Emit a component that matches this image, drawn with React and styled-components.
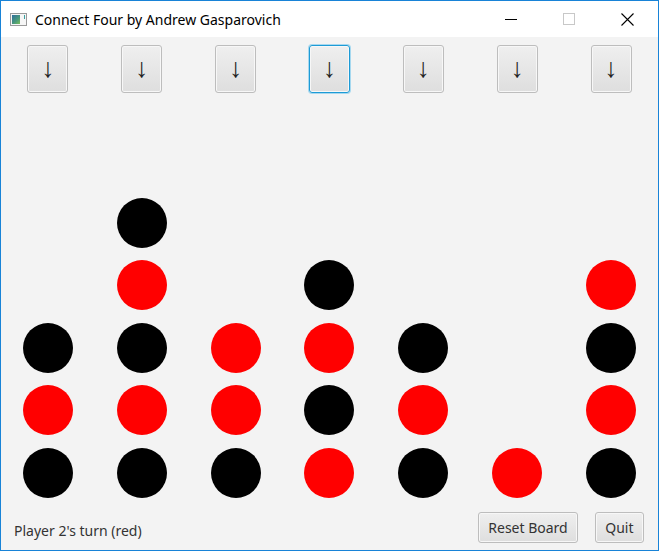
import React, { useState } from "react";
import styled, { createGlobalStyle } from "styled-components";

const GlobalStyle = createGlobalStyle`
  html, body {
    margin: 0;
    padding: 0;
    background: #ffffff;
  }
  * {
    box-sizing: border-box;
  }
`;

const Window = styled.div`
  width: 659px;
  height: 551px;
  border: 1px solid #1883d7;
  display: flex;
  flex-direction: column;
  font-family: "Noto Sans", "Open Sans", sans-serif;
  background: #f3f3f3;
  overflow: hidden;
`;

const TitleBar = styled.div`
  height: 36px;
  flex: none;
  background: #ffffff;
  display: flex;
  align-items: center;
  padding-left: 9px;
  padding-right: 2px;
`;

const AppIcon = styled.div`
  width: 17px;
  height: 13px;
  border: 1px solid #9a9a9a;
  background: #f6f6f6;
  display: flex;
  padding: 1px;
  gap: 2px;
  margin-right: 8px;
`;

const IconPane = styled.div`
  width: 8px;
  height: 100%;
  background: linear-gradient(135deg, #2f6e9c 0%, #4a9a7a 60%, #7cbf5a 100%);
`;

const IconDot = styled.div`
  width: 1px;
  height: 4px;
  background: #3aa0a0;
  margin-left: 2px;
`;

const Title = styled.div`
  font-family: "Noto Sans", sans-serif;
  font-size: 14px;
  color: #000000;
  flex: 1;
  white-space: nowrap;
`;

const Controls = styled.div`
  display: flex;
  height: 100%;
`;

const Control = styled.div`
  width: 58px;
  height: 100%;
  display: flex;
  align-items: center;
  justify-content: center;
`;

const Content = styled.div`
  flex: 1;
  display: flex;
  flex-direction: column;
  padding-top: 8px;
`;

const Columns = styled.div`
  display: grid;
  grid-template-columns: repeat(7, 1fr);
`;

const DropRow = styled(Columns)`
  height: 48px;
`;

const DropButton = styled.button`
  justify-self: center;
  width: 41px;
  height: 48px;
  padding: 0 0 2px 0;
  border-radius: 3px;
  border: 1px solid ${({ $focused }) => ($focused ? "#1d9bd6" : "#bdbdbd")};
  box-shadow: ${({ $focused }) =>
    $focused ? "0 0 0 1px #a6d8ef, inset 0 0 0 1px #f7f7f7" : "inset 0 0 0 1px #f7f7f7"};
  background: linear-gradient(#efefef, #dedede);
  font-family: "Liberation Sans", sans-serif;
  font-size: 27px;
  color: #222222;
  line-height: 1;
  cursor: pointer;
`;

const Board = styled(Columns)`
  margin-top: 36px;
  grid-template-rows: repeat(6, 62.5px);
`;

const Cell = styled.div`
  display: flex;
  align-items: center;
  justify-content: center;
`;

const Disc = styled.div`
  width: 50px;
  height: 50px;
  border-radius: 50%;
  background: ${({ $color }) => ($color === "r" ? "#ff0000" : "#000000")};
`;

const Footer = styled.div`
  margin-top: auto;
  display: flex;
  align-items: center;
  padding: 0 14px 6px 13px;
  height: 45px;
`;

const Status = styled.div`
  flex: 1;
  font-size: 14px;
  color: #333333;
  padding-top: 11px;
`;

const FooterButton = styled.button`
  height: 31px;
  padding: 0 ${({ $pad }) => $pad}px;
  margin-left: 17px;
  border-radius: 3px;
  border: 1px solid #bdbdbd;
  box-shadow: inset 0 0 0 1px #f7f7f7;
  background: linear-gradient(#efefef, #dedede);
  font-family: "Noto Sans", sans-serif;
  font-size: 14px;
  color: #333333;
  margin-top: 6px;
`;

const initialBoard = [
  "       ",
  " b     ",
  " r b  r",
  "bbrrb b",
  "rrrbr r",
  "bbbrbrb",
];

export default function App() {
  const [board] = useState(initialBoard);

  return (
    <>
      <GlobalStyle />
      <Window>
        <TitleBar>
          <AppIcon>
            <IconPane />
            <IconDot />
          </AppIcon>
          <Title>Connect Four by Andrew Gasparovich</Title>
          <Controls>
            <Control>
              <svg width="12" height="12" viewBox="0 0 12 12">
                <line x1="0" y1="6.5" x2="12" y2="6.5" stroke="#000" strokeWidth="1" />
              </svg>
            </Control>
            <Control>
              <svg width="12" height="12" viewBox="0 0 12 12">
                <rect x="0.5" y="0.5" width="11" height="11" fill="none" stroke="#c8c8c8" />
              </svg>
            </Control>
            <Control>
              <svg width="13" height="13" viewBox="0 0 13 13">
                <path d="M0.5 0.5 L12.5 12.5 M12.5 0.5 L0.5 12.5" stroke="#000" strokeWidth="1.1" />
              </svg>
            </Control>
          </Controls>
        </TitleBar>
        <Content>
          <DropRow>
            {[0, 1, 2, 3, 4, 5, 6].map((c) => (
              <DropButton key={c} $focused={c === 3}>
                ↓
              </DropButton>
            ))}
          </DropRow>
          <Board>
            {board.map((row, r) =>
              row.split("").map((v, c) => (
                <Cell key={r + "-" + c}>{v !== " " && <Disc $color={v} />}</Cell>
              ))
            )}
          </Board>
          <Footer>
            <Status>Player 2's turn (red)</Status>
            <FooterButton $pad={9}>Reset Board</FooterButton>
            <FooterButton $pad={9.5}>Quit</FooterButton>
          </Footer>
        </Content>
      </Window>
    </>
  );
}
